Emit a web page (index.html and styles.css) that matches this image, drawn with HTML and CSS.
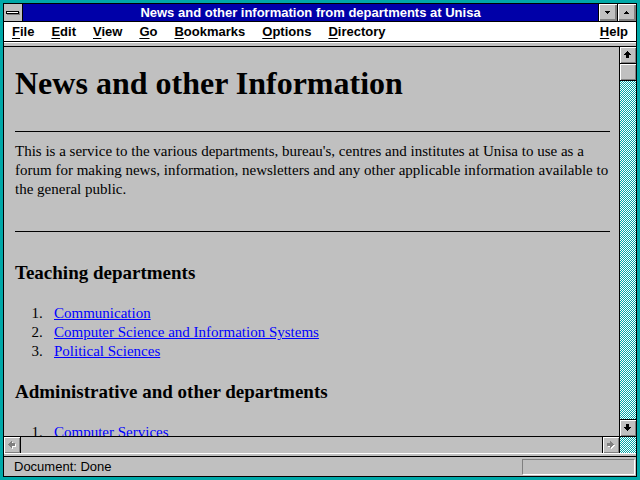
FILE: index.html
```html
<!DOCTYPE html>
<html lang="en">
<head>
    <meta charset="UTF-8">
    <title>News and other information from departments at Unisa</title>
    <link rel="stylesheet" href="styles.css">
</head>
<body>
    <svg class="defs" width="0" height="0">
        <defs>
            <pattern id="dither" width="2" height="2" patternUnits="userSpaceOnUse">
                <rect width="2" height="2" fill="#fff"/>
                <rect x="0" y="0" width="1" height="1" fill="#00a8a8"/>
                <rect x="1" y="1" width="1" height="1" fill="#00a8a8"/>
            </pattern>
        </defs>
    </svg>

    <div class="window">
        <div class="titlebar">
            <div class="sysmenu"><span class="sysbar"></span></div>
            <div class="title">News and other information from departments at Unisa</div>
            <div class="tbtn">
                <svg width="18" height="17" shape-rendering="crispEdges">
                    <rect x="6" y="7" width="5" height="1"/>
                    <rect x="7" y="8" width="3" height="1"/>
                    <rect x="8" y="9" width="1" height="1"/>
                </svg>
            </div>
            <div class="tbtn">
                <svg width="18" height="17" shape-rendering="crispEdges">
                    <rect x="8" y="7" width="1" height="1"/>
                    <rect x="7" y="8" width="3" height="1"/>
                    <rect x="6" y="9" width="5" height="1"/>
                </svg>
            </div>
        </div>

        <div class="menubar">
            <span class="menu"><u>F</u>ile</span>
            <span class="menu"><u>E</u>dit</span>
            <span class="menu"><u>V</u>iew</span>
            <span class="menu"><u>G</u>o</span>
            <span class="menu"><u>B</u>ookmarks</span>
            <span class="menu"><u>O</u>ptions</span>
            <span class="menu"><u>D</u>irectory</span>
            <span class="menu help"><u>H</u>elp</span>
        </div>
        <div class="band"></div>

        <div class="main">
            <div class="page">
                <h1>News and other Information</h1>
                <hr>
                <p>This is a service to the various departments, bureau's, centres and institutes at Unisa to use as a forum for making news, information, newsletters and any other applicable information available to the general public.</p>
                <hr>
                <h3>Teaching departments</h3>
                <ol>
                    <li><a href="#">Communication</a></li>
                    <li><a href="#">Computer Science and Information Systems</a></li>
                    <li><a href="#">Political Sciences</a></li>
                </ol>
                <h3>Administrative and other departments</h3>
                <ol>
                    <li><a href="#">Computer Services</a></li>
                </ol>
            </div>

            <div class="vscroll">
                <div class="sbtn">
                    <svg width="16" height="16" shape-rendering="crispEdges">
                        <rect x="7" y="4" width="1" height="1"/>
                        <rect x="6" y="5" width="3" height="1"/>
                        <rect x="5" y="6" width="5" height="1"/>
                        <rect x="4" y="7" width="7" height="1"/>
                        <rect x="6" y="8" width="3" height="3"/>
                    </svg>
                </div>
                <div class="sbtn thumb"></div>
                <div class="track">
                    <svg width="100%" height="100%"><rect width="100%" height="100%" fill="url(#dither)"/></svg>
                </div>
                <div class="sbtn down">
                    <svg width="16" height="16" shape-rendering="crispEdges">
                        <rect x="6" y="4" width="3" height="3"/>
                        <rect x="4" y="7" width="7" height="1"/>
                        <rect x="5" y="8" width="5" height="1"/>
                        <rect x="6" y="9" width="3" height="1"/>
                        <rect x="7" y="10" width="1" height="1"/>
                    </svg>
                </div>
            </div>
        </div>

        <div class="hscroll">
            <div class="sbtn left">
                <svg width="16" height="16" shape-rendering="crispEdges">
                    <g fill="#fff" transform="translate(1 1)">
                        <rect x="4" y="7" width="1" height="1"/>
                        <rect x="5" y="6" width="1" height="3"/>
                        <rect x="6" y="5" width="1" height="5"/>
                        <rect x="7" y="4" width="1" height="7"/>
                        <rect x="8" y="6" width="3" height="3"/>
                    </g>
                    <g fill="#808080">
                        <rect x="4" y="7" width="1" height="1"/>
                        <rect x="5" y="6" width="1" height="3"/>
                        <rect x="6" y="5" width="1" height="5"/>
                        <rect x="7" y="4" width="1" height="7"/>
                        <rect x="8" y="6" width="3" height="3"/>
                    </g>
                </svg>
            </div>
            <div class="htrack"></div>
            <div class="sbtn right">
                <svg width="16" height="16" shape-rendering="crispEdges">
                    <g fill="#fff" transform="translate(1 1)">
                        <rect x="4" y="6" width="3" height="3"/>
                        <rect x="7" y="4" width="1" height="7"/>
                        <rect x="8" y="5" width="1" height="5"/>
                        <rect x="9" y="6" width="1" height="3"/>
                        <rect x="10" y="7" width="1" height="1"/>
                    </g>
                    <g fill="#808080">
                        <rect x="4" y="6" width="3" height="3"/>
                        <rect x="7" y="4" width="1" height="7"/>
                        <rect x="8" y="5" width="1" height="5"/>
                        <rect x="9" y="6" width="1" height="3"/>
                        <rect x="10" y="7" width="1" height="1"/>
                    </g>
                </svg>
            </div>
            <div class="corner">
                <svg width="100%" height="100%"><rect width="100%" height="100%" fill="url(#dither)"/></svg>
            </div>
        </div>
        <div class="band band-low"></div>

        <div class="status">
            <span class="status-text">Document: Done</span>
            <div class="meter"></div>
        </div>
    </div>
</body>
</html>
```

FILE: styles.css
```css
:root {
    --frame: #00a8a8;
    --face: #c0c0c0;
    --shadow: #808080;
    --caption: #0000a8;
    --link: #0000ff;
}

html,
body {
    margin: 0;
    padding: 0;
}

body {
    width: 640px;
    height: 480px;
    padding: 3px;
    box-sizing: border-box;
    background-color: var(--frame);
    overflow: hidden;
}

.defs {
    position: absolute;
}

.window {
    height: 100%;
    border: 1px solid #000;
    box-sizing: border-box;
    display: flex;
    flex-direction: column;
    background-color: var(--face);
    font-family: 'Liberation Sans', Arial, sans-serif;
    font-size: 13px;
}

/* title bar */
.titlebar {
    display: flex;
    height: 17px;
    border-bottom: 1px solid #000;
    flex-shrink: 0;
}

.sysmenu {
    width: 18px;
    border-right: 1px solid #000;
    background-color: var(--face);
    display: flex;
    align-items: center;
    justify-content: center;
}

.sysbar {
    width: 11px;
    height: 1px;
    background-color: #fff;
    border: 1px solid #000;
    box-shadow: 1px 1px var(--shadow);
    margin: 0 1px 0 0;
}

.title {
    flex: 1;
    background-color: var(--caption);
    color: #fff;
    font-weight: bold;
    line-height: 17px;
    text-align: center;
    white-space: nowrap;
}

.tbtn {
    width: 18px;
    border-left: 1px solid #000;
    background-color: var(--face);
    box-shadow: inset 1px 1px #fff, inset -1px -1px var(--shadow), inset -2px -2px var(--shadow);
}

.tbtn svg,
.sbtn svg,
.track svg,
.corner svg {
    display: block;
}

/* menu bar */
.menubar {
    display: flex;
    gap: 1px;
    height: 19px;
    line-height: 19px;
    background-color: #fff;
    border-bottom: 1px solid #000;
    font-weight: bold;
    flex-shrink: 0;
}

.menu {
    padding: 0 8px;
    white-space: nowrap;
}

.menu u {
    text-underline-offset: 2px;
}

.help {
    margin-left: auto;
}

.band {
    height: 3px;
    border-top: 1px solid #fff;
    border-bottom: 1px solid #000;
    flex-shrink: 0;
}

.band-low {
    height: 2px;
}

/* document area */
.main {
    flex: 1;
    min-height: 0;
    display: flex;
}

.page {
    flex: 1;
    overflow: hidden;
    padding: 0 9px 0 11px;
    font-family: 'Liberation Serif', 'Times New Roman', serif;
    font-size: 15px;
    line-height: 19px;
    color: #000;
}

.page h1 {
    font-size: 32px;
    line-height: 37px;
    margin: 18px 0 29px;
}

.page hr {
    margin: 0;
    border: none;
    border-top: 1px solid #000;
    height: 0;
}

.page p {
    margin: 10px 0 32px;
}

.page h3 {
    font-size: 19px;
    line-height: 22px;
    margin: 20px 0;
}

.page hr + h3 {
    margin-top: 30px;
}

.page ol {
    margin: 20px 0;
    padding-left: 39px;
}

.page li::marker {
    content: counter(list-item) ".\00a0\00a0\00a0";
}

.page a {
    color: var(--link);
}

/* scroll bars */
.vscroll {
    width: 16px;
    border-left: 1px solid #000;
    display: flex;
    flex-direction: column;
}

.sbtn {
    width: 16px;
    height: 16px;
    flex-shrink: 0;
    background-color: var(--face);
    box-shadow: inset 1px 1px #fff, inset -1px -1px var(--shadow);
}

.thumb {
    border-top: 1px solid #000;
    border-bottom: 1px solid #000;
}

.down {
    border-top: 1px solid #000;
}

.track {
    flex: 1;
    min-height: 0;
}

.hscroll {
    display: flex;
    height: 16px;
    border-top: 1px solid #000;
    flex-shrink: 0;
}

.left {
    border-right: 1px solid #000;
}

.htrack {
    flex: 1;
}

.right {
    border-left: 1px solid #000;
}

.corner {
    width: 16px;
    border-left: 1px solid #000;
}

/* status bar */
.status {
    height: 19px;
    flex-shrink: 0;
    display: flex;
    padding-left: 10px;
    line-height: 19px;
    color: #000;
}

.meter {
    margin: 2px 1px 0 auto;
    width: 111px;
    height: 14px;
    border: 1px solid;
    border-color: var(--shadow) #fff #fff var(--shadow);
}
```
